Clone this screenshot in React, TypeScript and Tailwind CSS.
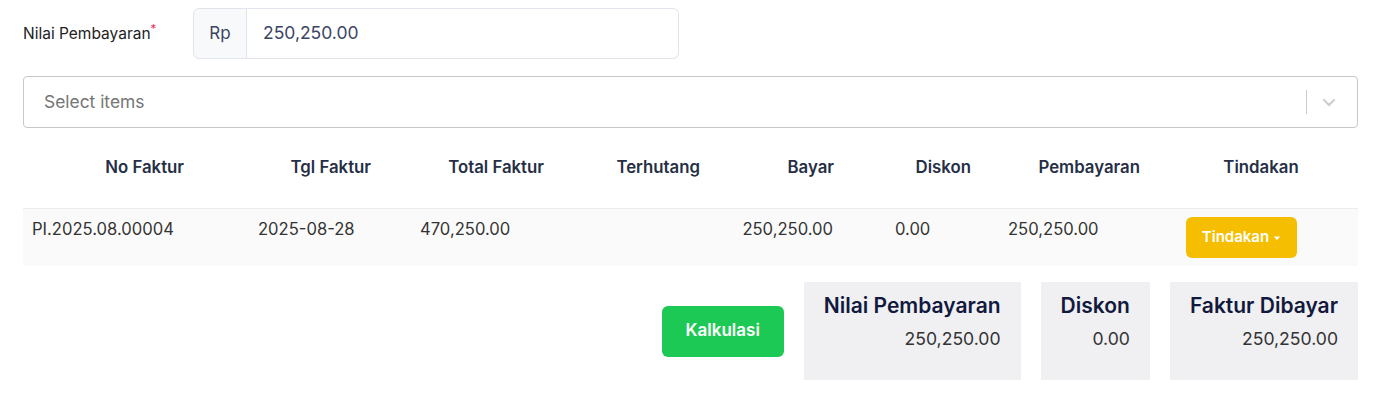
const headers = [
  { label: "No Faktur", cls: "text-right pr-3" },
  { label: "Tgl Faktur", cls: "text-right pr-3" },
  { label: "Total Faktur", cls: "text-right pr-3" },
  { label: "Terhutang", cls: "text-right pr-3" },
  { label: "Bayar", cls: "text-right pr-3" },
  { label: "Diskon", cls: "text-right pr-3" },
  { label: "Pembayaran", cls: "text-right pr-3" },
  { label: "Tindakan", cls: "text-center pl-3" },
];

const cols = "grid-cols-[173px_187px_173px_156px_134px_137px_169px_1fr]";

function SummaryBox({ title, value }: { title: string; value: string }) {
  return (
    <div className="flex h-[98px] flex-col items-end bg-[#f0f0f3] px-5 pt-[10px]">
      <p className="text-[21px] font-semibold leading-7 text-[#111a3d]">{title}</p>
      <p className="mt-[7px] text-[17.6px] leading-6 text-[#333]">{value}</p>
    </div>
  );
}

export default function App() {
  return (
    <div
      className="w-[1384px] bg-white pl-[23px] pr-[26px] pt-2"
      style={{ fontFamily: "Inter, 'Noto Sans', sans-serif" }}
    >
      <div className="flex items-center">
        <label className="w-[170px] text-[15.5px] text-[#222]">
          Nilai Pembayaran<sup className="text-[#f0325a]">*</sup>
        </label>
        <div className="flex h-[51px]">
          <span className="flex w-[54px] items-center justify-center rounded-l-md border border-[#e1e4ec] bg-[#f8f9fb] text-[17px] text-[#3b4563]">
            Rp
          </span>
          <div className="flex w-[432px] items-center rounded-r-md border border-l-0 border-[#e1e4ec] px-4 text-[17.5px] text-[#3b4563]">
            250,250.00
          </div>
        </div>
      </div>

      <div className="mt-[17px] flex h-[52px] items-center rounded border border-[#c8c8c8] pl-5 pr-[15px]">
        <span className="flex-1 text-[17.4px] text-[#757575]">Select items</span>
        <span className="h-6 w-px bg-[#cccccc]" />
        <svg className="ml-[13px] mr-[4px] h-[18px] w-[18px]" viewBox="0 0 20 20" fill="#cccccc">
          <path d="M4.5 6.3l5.5 5.5 5.5-5.5 1.6 1.6-7.1 7-7.1-7z" />
        </svg>
      </div>

      <div className={`grid ${cols} h-[80px] items-center text-[16.8px] font-semibold text-[#262f45]`}>
        {headers.map((h) => (
          <div key={h.label} className={h.cls}>
            {h.label}
          </div>
        ))}
      </div>

      <div className={`grid ${cols} h-[58px] items-start border-t border-[#ececec] bg-[#fafafa] text-[16.6px] text-[#333]`}>
        <div className="pl-[9px] pt-[8px]">PI.2025.08.00004</div>
        <div className="pl-[62px] pt-[8px]">2025-08-28</div>
        <div className="pl-[37px] pt-[8px]">470,250.00</div>
        <div />
        <div className="pr-[13px] pt-[8px] text-right">250,250.00</div>
        <div className="pl-[49px] pt-[8px]">0.00</div>
        <div className="pl-[25px] pt-[8px]">250,250.00</div>
        <div className="pl-[34px] pt-2">
          <button className="flex h-[41px] w-[111px] items-center justify-center gap-1 rounded-md bg-[#f5be00] text-[15px] font-semibold text-white">
            Tindakan
            <svg className="h-2 w-2" viewBox="0 0 10 10" fill="white">
              <path d="M1 3h8L5 7.5z" />
            </svg>
          </button>
        </div>
      </div>

      <div className="mt-4 flex items-center justify-end gap-5">
        <button className="h-[51px] w-[122px] rounded-md bg-[#1dc955] text-[17px] font-semibold text-white">
          Kalkulasi
        </button>
        <SummaryBox title="Nilai Pembayaran" value="250,250.00" />
        <SummaryBox title="Diskon" value="0.00" />
        <SummaryBox title="Faktur Dibayar" value="250,250.00" />
      </div>
    </div>
  );
}
